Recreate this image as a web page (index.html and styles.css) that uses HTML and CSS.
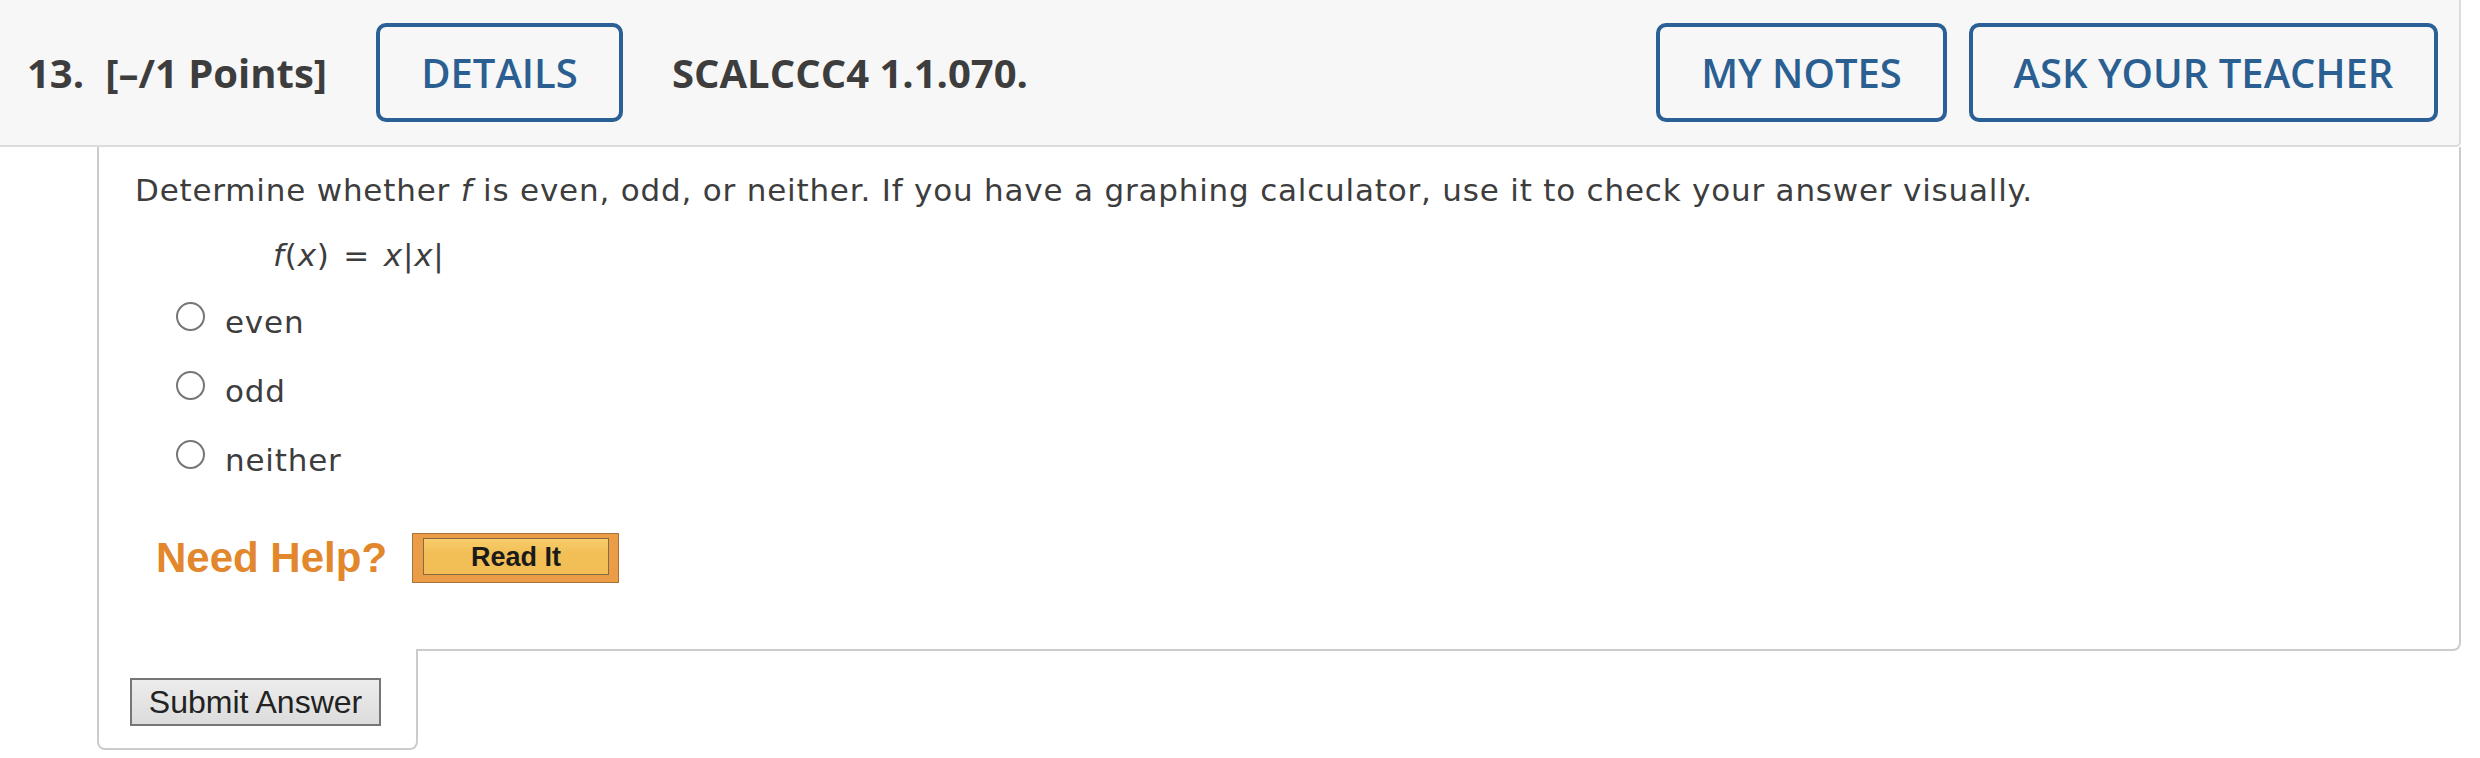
FILE: index.html
```html
<!DOCTYPE html>
<html lang="en">
<head>
<meta charset="utf-8">
<title>Question 13</title>
<link rel="stylesheet" href="styles.css">
</head>
<body>
<div class="question">
  <header class="q-head">
    <div class="q-title"><span>13.</span><span>[–/1 Points]</span></div>
    <button class="hbtn hbtn-details">DETAILS</button>
    <div class="q-code">SCALCCC4 1.1.070.</div>
    <div class="spacer"></div>
    <button class="hbtn hbtn-notes">MY NOTES</button>
    <button class="hbtn hbtn-ask">ASK YOUR TEACHER</button>
  </header>
  <section class="q-body">
    <p class="prompt">Determine whether <i>f</i> is even, odd, or neither. If you have a graphing calculator, use it to check your answer visually.</p>
    <p class="equation"><i>f</i>(<i>x</i>) <span class="op">=</span> <i>x</i>|<i>x</i>|</p>
    <ul class="choices">
      <li class="choice"><input type="radio" name="a" class="radio"><span>even</span></li>
      <li class="choice"><input type="radio" name="a" class="radio"><span>odd</span></li>
      <li class="choice"><input type="radio" name="a" class="radio"><span>neither</span></li>
    </ul>
    <div class="help">
      <span class="help-label">Need Help?</span>
      <span class="read-it"><span class="read-it-inner">Read It</span></span>
    </div>
  </section>
  <div class="submit-box">
    <button class="submit">Submit Answer</button>
  </div>
</div>
</body>
</html>
```
FILE: styles.css
```css
html, body {
  margin: 0;
  padding: 0;
  background: #ffffff;
}

.question {
  width: 2461px;
}

.q-head {
  display: flex;
  align-items: center;
  height: 145px;
  box-sizing: content-box;
  background: #f7f7f7;
  border-right: 2px solid #dcdcdc;
  border-bottom: 2px solid #dcdcdc;
  border-bottom-right-radius: 5px;
  padding: 0 21px 0 27px;
  font-family: "Open Sans", "Liberation Sans", sans-serif;
  color: #3d3d3d;
}

.q-title {
  display: flex;
  gap: 21px;
  font-weight: 700;
  font-size: 40px;
  width: 349px;
}

.q-code {
  font-weight: 700;
  font-size: 40px;
  margin-left: 49px;
}

.spacer {
  flex: 1;
}

.hbtn {
  height: 99px;
  box-sizing: border-box;
  border: 4px solid #2b6096;
  border-radius: 10px;
  background: transparent;
  color: #2b5f92;
  font-family: "Open Sans", "Liberation Sans", sans-serif;
  font-weight: 600;
  font-size: 40px;
  padding: 0;
  text-align: center;
}

.hbtn-details { width: 247px; }
.hbtn-notes { width: 291px; margin-right: 22px; }
.hbtn-ask { width: 469px; }

.q-body {
  margin-left: 97px;
  border: 2px solid #cccccc;
  border-top: none;
  border-bottom-right-radius: 8px;
  padding: 25px 0 66px 36px;
  font-family: "DejaVu Sans", Verdana, sans-serif;
  font-size: 31px;
  letter-spacing: 0.8px;
  line-height: 36px;
  color: #3d3d3d;
}

.prompt {
  margin: 0;
}

.equation {
  margin: 29px 0 0 138px;
}

.op {
  margin: 0 3px;
}

.choices {
  list-style: none;
  margin: 31px 0 0 0;
  padding: 0;
  display: flex;
  flex-direction: column;
  gap: 33px;
}

.choice {
  display: flex;
  align-items: flex-start;
  height: 36px;
  padding-left: 41px;
}

.radio {
  appearance: none;
  -webkit-appearance: none;
  width: 29px;
  height: 29px;
  box-sizing: border-box;
  border: 2px solid #767676;
  border-radius: 50%;
  background: #fff;
  margin: -2px 20px 0 0;
  flex: none;
}

.help {
  display: flex;
  align-items: center;
  height: 50px;
  margin-top: 55px;
  padding-left: 21px;
  letter-spacing: 0;
}

.help-label {
  font-family: "Liberation Sans", Arial, sans-serif;
  font-weight: 700;
  font-size: 42px;
  line-height: 1.117;
  color: #e3872d;
  margin-right: 25px;
}

.read-it {
  display: block;
  width: 207px;
  height: 50px;
  box-sizing: border-box;
  border: 1px solid #a7733a;
  background: #eb9c46;
  padding: 4px 9px 7px 10px;
}

.read-it-inner {
  display: flex;
  align-items: center;
  justify-content: center;
  height: 100%;
  box-sizing: border-box;
  border: 1px solid #866a42;
  background: linear-gradient(#f7cd6c, #f2bf57 40%, #f2bd55);
  font-family: "Liberation Sans", Arial, sans-serif;
  font-weight: 700;
  font-size: 27px;
  color: #1a1a1a;
}

.submit-box {
  width: 321px;
  box-sizing: border-box;
  margin: -2px 0 0 97px;
  background: #fff;
  border: 2px solid #cccccc;
  border-top: none;
  border-radius: 0 0 8px 8px;
  padding: 29px 0 22px 31px;
}

.submit {
  display: block;
  width: 251px;
  height: 48px;
  box-sizing: border-box;
  border: 2px solid #767676;
  background: linear-gradient(#ececec, #dcdcdc);
  font-family: "Liberation Sans", Arial, sans-serif;
  font-size: 32px;
  color: #222;
  padding: 0;
  border-radius: 0;
}
```
